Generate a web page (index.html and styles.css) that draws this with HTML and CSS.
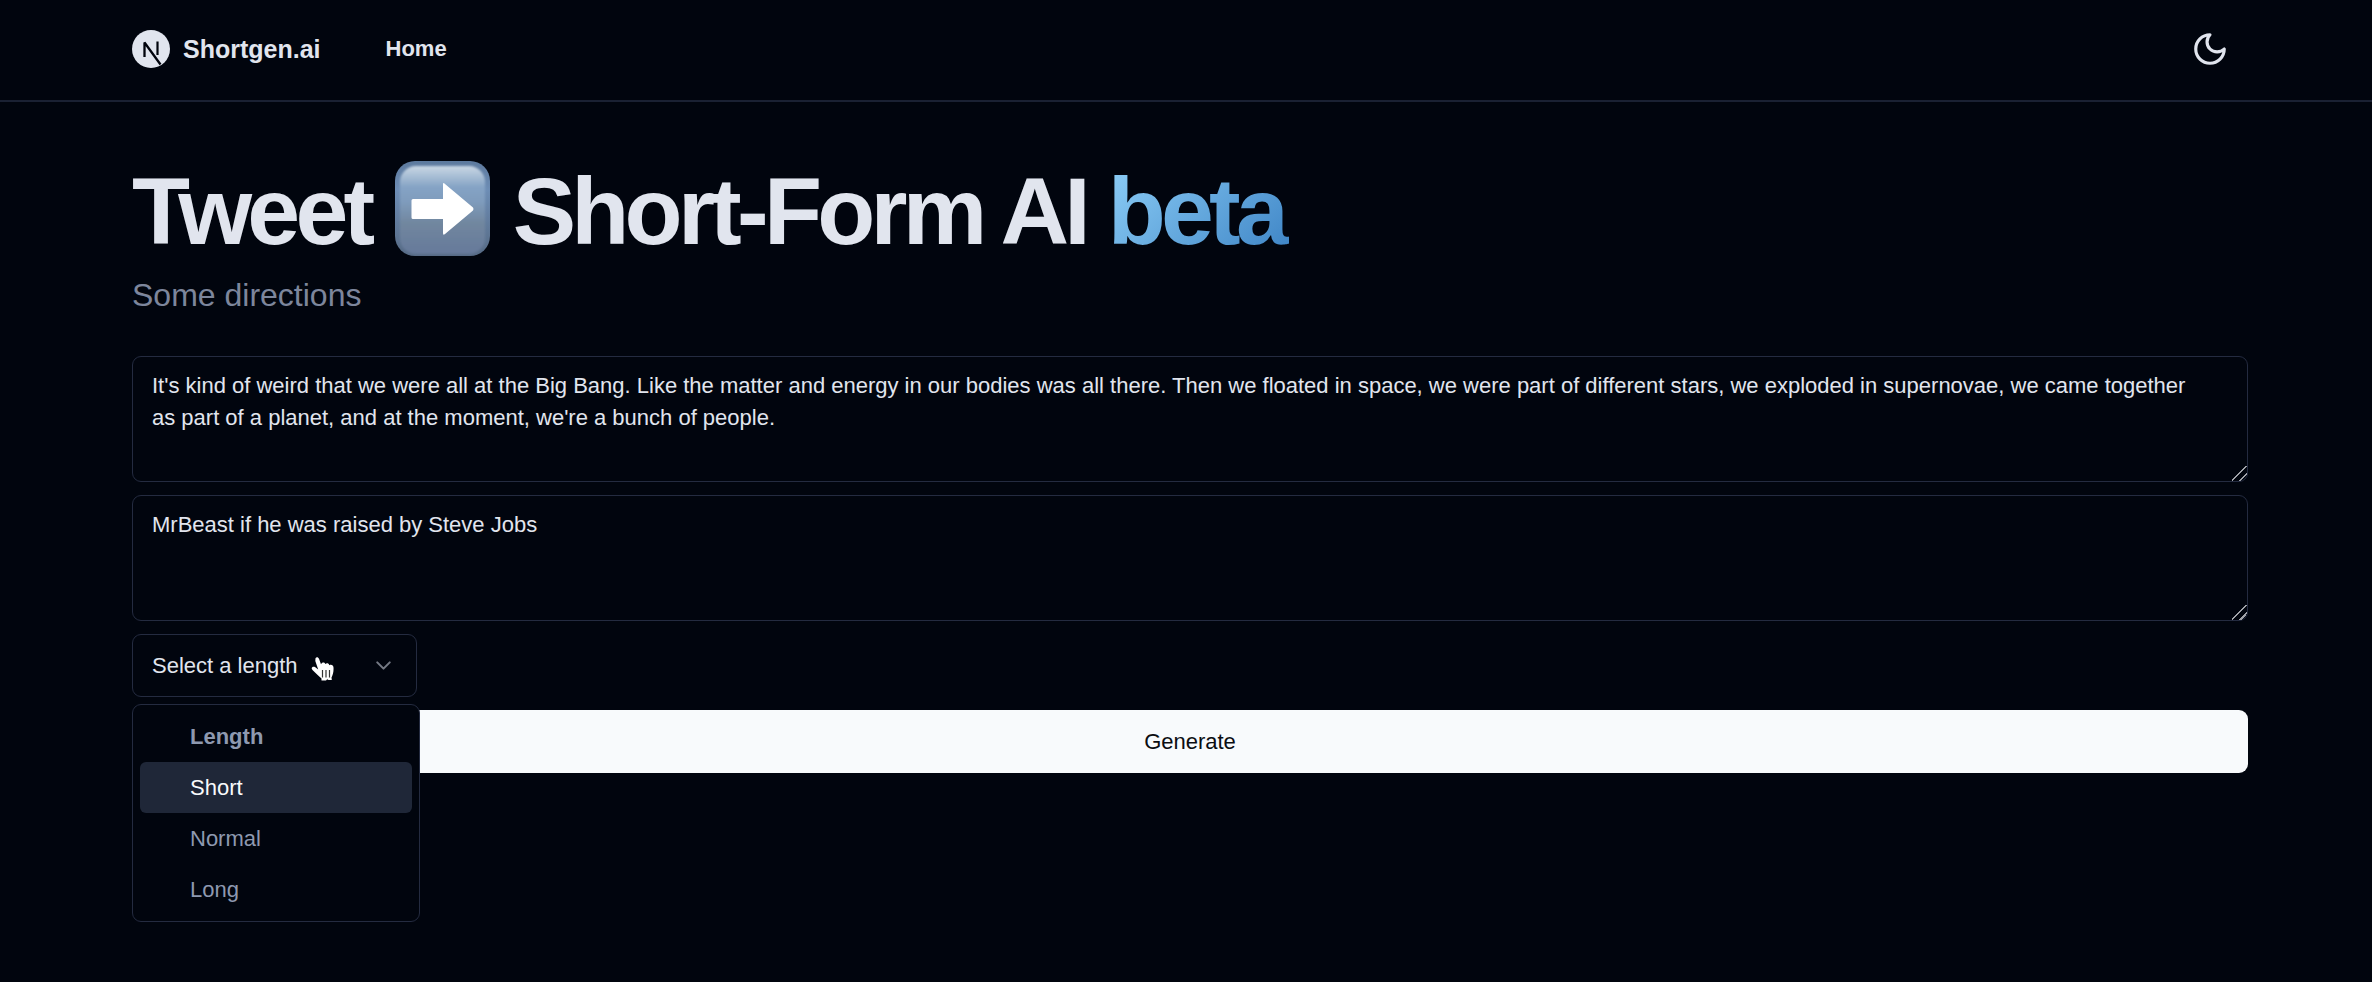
FILE: index.html
```html
<!DOCTYPE html>
<html lang="en">
<head>
<meta charset="utf-8">
<title>Shortgen.ai</title>
<link rel="stylesheet" href="styles.css">
</head>
<body>
<header class="site-header">
  <a class="brand" href="#">
    <svg class="brand-logo" viewBox="0 0 38 38" aria-hidden="true">
      <circle cx="19" cy="19" r="19" fill="#e1e5ee"/>
      <path d="M12.500 27V12.500L28.500 34.500" fill="none" stroke="#01040d" stroke-width="2.300" stroke-linejoin="bevel"/>
      <path d="M25.500 11.500V25" fill="none" stroke="#01040d" stroke-width="2.200"/>
    </svg>
    <span>Shortgen.ai</span>
  </a>
  <nav class="nav"><a class="nav-link" href="#">Home</a></nav>
  <button class="theme-toggle" type="button" aria-label="Toggle theme">
    <svg class="theme-icon" viewBox="0 0 24 24" fill="none" stroke="currentColor" stroke-width="2" stroke-linecap="round" stroke-linejoin="round" aria-hidden="true"><path d="M12 3a6 6 0 0 0 9 9 9 9 0 1 1-9-9Z"/></svg>
  </button>
</header>
<main class="main">
  <h1 class="title">Tweet
    <svg class="arrow" viewBox="0 0 95 95" role="img" aria-label="right arrow">
      <defs>
        <linearGradient id="edge" x1="0" y1="0" x2="0" y2="1"><stop offset="0" stop-color="#5d7a9e"/><stop offset=".3" stop-color="#6d8db5"/><stop offset="1" stop-color="#566a84"/></linearGradient>
        <linearGradient id="face" x1="0" y1="0" x2="0" y2="1"><stop offset="0" stop-color="#c9d7e4"/><stop offset=".24" stop-color="#85a3c5"/><stop offset=".4" stop-color="#7f9cbd"/><stop offset=".65" stop-color="#71879f"/><stop offset="1" stop-color="#66799a"/></linearGradient>
        <filter id="soft"><feGaussianBlur stdDeviation="1"/></filter>
      </defs>
      <rect width="95" height="95" rx="20" fill="url(#edge)"/>
      <rect x="5" y="5" width="85" height="88" rx="16" fill="url(#face)" filter="url(#soft)"/>
      <path d="M18 38H48V23.500Q48 21 50 23L78 46.500Q79 48 78 49.500L50 73Q48 75 48 72V58H18Q16.500 58 16.500 56.500V39.500Q16.500 38 18 38Z" fill="#fff"/>
    </svg>
    Short-Form AI <span class="beta">beta</span></h1>
  <p class="subtitle">Some directions</p>
  <form class="form">
    <textarea class="field" aria-label="Tweet">It's kind of weird that we were all at the Big Bang. Like the matter and energy in our bodies was all there. Then we floated in space, we were part of different stars, we exploded in supernovae, we came together as part of a planet, and at the moment, we're a bunch of people.</textarea>
    <textarea class="field" aria-label="Style">MrBeast if he was raised by Steve Jobs</textarea>
    <div class="picker">
      <select class="select" aria-label="Length"><option>Select a length</option></select>
      <svg class="chevron" viewBox="0 0 24 24" fill="none" stroke="currentColor" stroke-width="2" stroke-linecap="round" stroke-linejoin="round" aria-hidden="true"><path d="m6 9 6 6 6-6"/></svg>
      <svg class="pointer" viewBox="0 0 24 26" aria-hidden="true">
        <path d="M4.500 2.300C5.300 .6 7.300 .8 8 2.800L10 8.300C11 6 13.500 6 14.300 8C15.800 6.800 17.800 7.300 18.300 9.200C20.300 8.300 22.300 9 22.500 11.500C22.800 15.500 21.800 19 20.500 21.500L20.800 24H17.500L16.200 23.200L15 24.400H10.500V22.600C8 20.500 5 17.500 1.500 14C-.5 12 1.500 10 4 11L7.200 13.500L4.300 5Z" fill="#fff"/>
        <path d="M11.500 14V21.500M15 14V21.500M18.500 14V21.500" fill="none" stroke="#333" stroke-width="1.200"/>
      </svg>
      <div class="menu" role="listbox" aria-label="Length">
        <div class="menu-label">Length</div>
        <div class="menu-item is-active" role="option" aria-selected="false">Short</div>
        <div class="menu-item" role="option" aria-selected="false">Normal</div>
        <div class="menu-item" role="option" aria-selected="false">Long</div>
      </div>
    </div>
    <button class="generate" type="button">Generate</button>
  </form>
</main>
</body>
</html>
```
FILE: styles.css
```css
:root {
  color-scheme: dark;
  --bg: #01050e;
  --text: #e1e5ee;
  --muted: #8e99b0;
  --line: #242b40;
}

* { box-sizing: border-box; }

body {
  margin: 0;
  min-height: 100vh;
  background: var(--bg);
  color: var(--text);
  font: 22px/32px "Liberation Sans", Arial, sans-serif;
}

a { color: inherit; text-decoration: none; }
button, select, textarea { font: inherit; color: inherit; }

.site-header {
  display: flex;
  align-items: center;
  gap: 65px;
  height: 102px;
  padding: 0 124px 2px 132px;
  border-bottom: 2px solid #1a2133;
}

.brand {
  display: flex;
  align-items: center;
  gap: 13px;
  font-size: 25px;
  font-weight: 700;
}

.brand-logo { width: 38px; height: 38px; }
.nav { flex: 1; }
.nav-link { font-weight: 700; }

.theme-toggle {
  display: flex;
  padding: 0 19px;
  border: 0;
  background: none;
}

.theme-icon { width: 38px; height: 38px; }

.main { padding: 59px 124px 48px 132px; }

.title {
  margin: 0;
  font-size: 95px;
  line-height: 96px;
  font-weight: 700;
  letter-spacing: -0.05em;
}

.arrow {
  width: 95px;
  height: 95px;
  margin: 0 1px 0 3px;
  vertical-align: -12px;
}

.beta {
  padding-right: 5px;
  background: linear-gradient(135deg, #8fd0f8, #3b82c4);
  background-clip: text;
  -webkit-background-clip: text;
  color: transparent;
}

.subtitle {
  margin: 14px 0 39px;
  font-size: 32px;
  line-height: 44px;
  color: #7d869c;
}

.form {
  display: flex;
  flex-direction: column;
  gap: 13px;
}

.field {
  display: block;
  width: 100%;
  height: 126px;
  padding: 13px 40px 12px 19px;
  border: 1px solid var(--line);
  border-radius: 9px;
  background: transparent;
  resize: vertical;
}

.field::-webkit-resizer {
  background: linear-gradient(135deg, transparent 45%, #a0a2a8 45% 53%, transparent 53% 72%, #a0a2a8 72% 80%, transparent 80%);
}

.picker {
  position: relative;
  width: 285px;
}

.select {
  display: block;
  width: 100%;
  height: 63px;
  padding: 0 19px;
  border: 1px solid var(--line);
  border-radius: 9px;
  background: transparent;
  appearance: none;
}

.chevron {
  position: absolute;
  top: 19px;
  right: 21px;
  width: 25px;
  height: 25px;
  color: #747984;
}

.pointer {
  position: absolute;
  top: 22px;
  left: 179px;
  width: 24px;
  height: 26px;
}

.menu {
  position: absolute;
  top: 70px;
  left: 0;
  width: 288px;
  padding: 6px 7px;
  border: 1px solid var(--line);
  border-radius: 9px;
  background: var(--bg);
  color: var(--muted);
}

.menu-label, .menu-item {
  padding: 10px 13px 9px 50px;
  border-radius: 6px;
}

.menu-label { font-weight: 700; }

.is-active {
  background: #1f2738;
  color: #f8fafc;
}

.generate {
  width: 100%;
  height: 63px;
  border: 0;
  border-radius: 9px;
  background: #f8fafc;
  color: #0b0d12;
}
```
